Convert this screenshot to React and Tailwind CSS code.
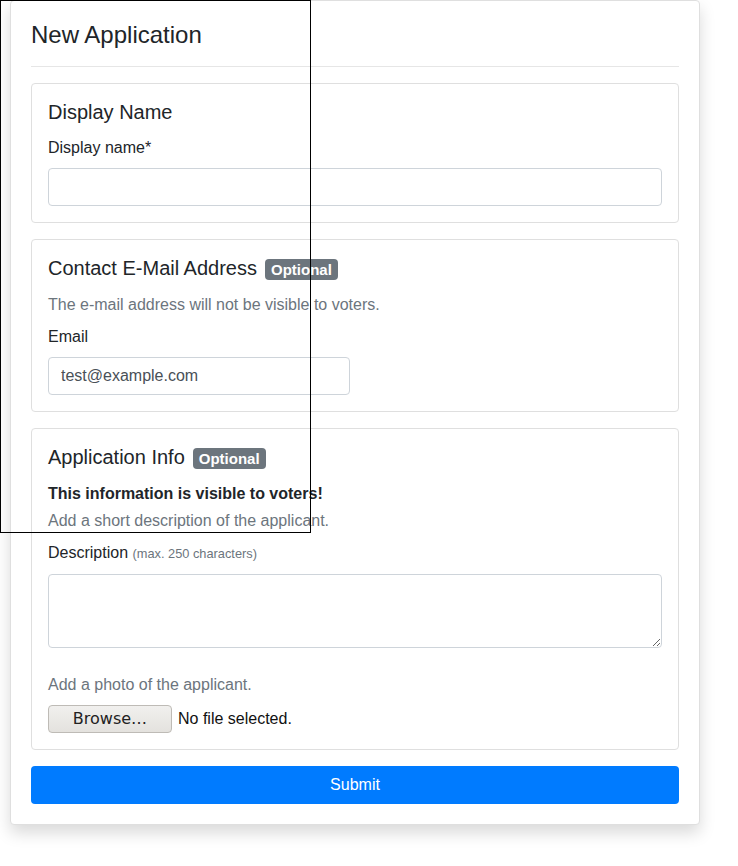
import React, { useState } from 'react'

function Badge() {
  return (
    <span className="ml-[8px] inline-block rounded-[4px] bg-[#6c757d] px-[6px] py-[3px] align-baseline text-[15px] font-bold leading-[15px] text-white">
      Optional
    </span>
  )
}

function Section({ title, optional, children }) {
  return (
    <div className="mb-[16px] rounded-[4px] border border-[#dfdfdf] p-[16px]">
      <h5 className={optional ? 'mb-[13px] text-[20px] leading-[24px] text-[#212529]' : 'mb-[12px] text-[20px] leading-[24px] text-[#212529]'}>
        {title}
        {optional && <Badge />}
      </h5>
      {children}
    </div>
  )
}

function App() {
  const [name, setName] = useState('')
  const [email, setEmail] = useState('test@example.com')
  const [desc, setDesc] = useState('')

  return (
    <div className="relative min-h-[866px] bg-white font-['Liberation_Sans',Arial,sans-serif] text-[16px] leading-[24px] text-[#212529]">
      <div className="ml-[10px] w-[690px] rounded-[4px] border border-[#dfdfdf] bg-white px-[20px] pt-[20px] pb-[20px] shadow-[0_8px_16px_rgba(0,0,0,0.15)]">
        <h4 className="text-[24px] leading-[28.8px] text-[#212529]">New Application</h4>
        <hr className="my-[16px] border-t border-[#e6e6e6]" />

        <Section title="Display Name">
          <label className="mb-[8px] block">Display name*</label>
          <input
            className="block h-[38px] w-full rounded-[4px] border border-[#ced4da] px-[12px] text-[16px] text-[#495057] outline-none"
            value={name}
            onChange={(e) => setName(e.target.value)}
          />
        </Section>

        <Section title="Contact E-Mail Address" optional>
          <p className="mb-[8px] text-[#6c757d]">The e-mail address will not be visible to voters.</p>
          <label className="mb-[8px] block">Email</label>
          <input
            className="block h-[38px] w-[302px] rounded-[4px] border border-[#ced4da] px-[12px] text-[16px] text-[#495057] outline-none"
            value={email}
            onChange={(e) => setEmail(e.target.value)}
          />
        </Section>

        <Section title="Application Info" optional>
          <p className="mb-[3px] font-bold">This information is visible to voters!</p>
          <p className="mb-[8px] text-[#6c757d]">Add a short description of the applicant.</p>
          <label className="mb-[8px] block">
            Description <small className="text-[12.8px] text-[#6c757d]">(max. 250 characters)</small>
          </label>
          <textarea
            className="block h-[74px] w-full rounded-[4px] border border-[#ced4da] px-[12px] py-[6px] text-[16px] text-[#495057] outline-none"
            value={desc}
            onChange={(e) => setDesc(e.target.value)}
          />
          <p className="mt-[25px] mb-[8px] text-[#6c757d]">Add a photo of the applicant.</p>
          <div className="flex h-[28px] items-center">
            <button className="h-[28px] w-[124px] rounded-[4px] border border-[#bebbb6] bg-gradient-to-b from-[#f1f0ee] to-[#e4e2de] font-['DejaVu_Sans',sans-serif] text-[16px] leading-[26px] text-[#222]">
              Browse…
            </button>
            <span className="ml-[6px] text-[#111]">No file selected.</span>
          </div>
        </Section>

        <button className="block h-[38px] w-full rounded-[4px] bg-[#007bff] text-[16px] text-white">
          Submit
        </button>
      </div>

      <div className="pointer-events-none absolute top-0 left-0 h-[533px] w-[311px] border border-black"></div>
    </div>
  )
}

export default App
